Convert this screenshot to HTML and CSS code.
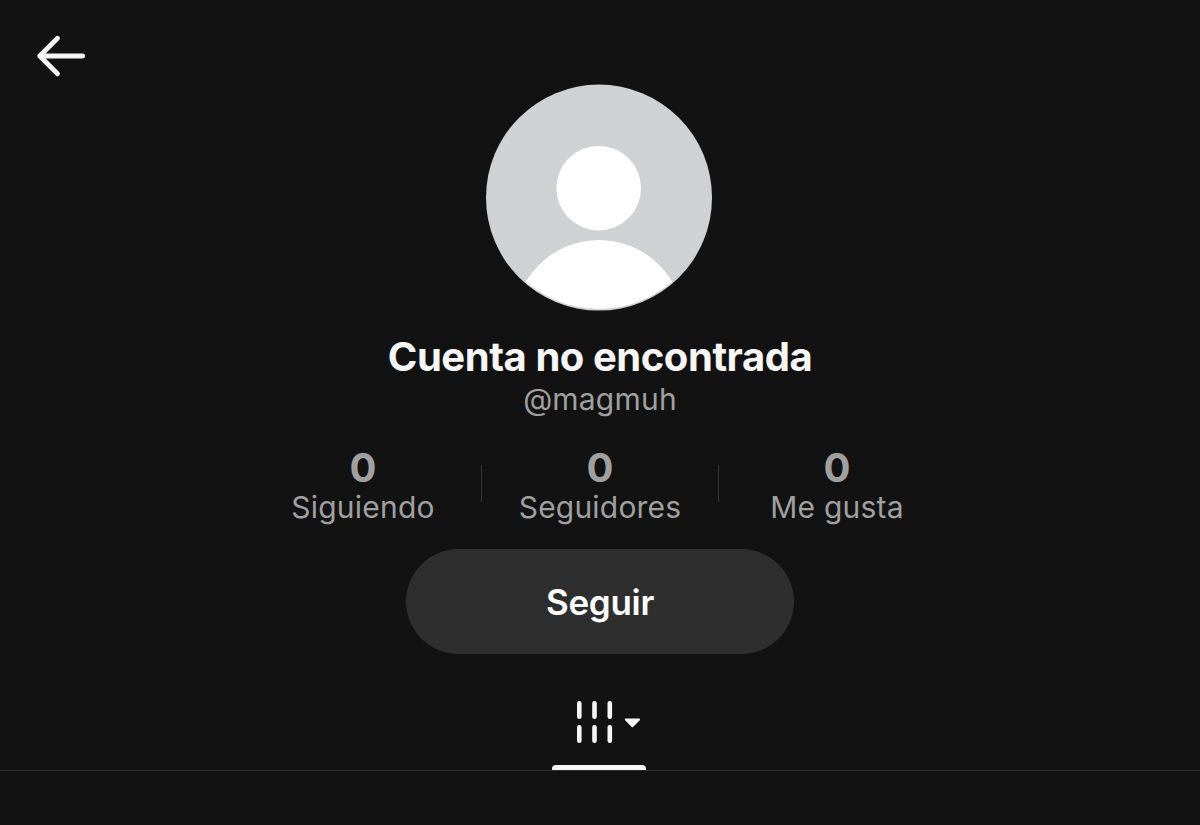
FILE: index.html
```
<!DOCTYPE html>
<html lang="es">
  <head>
    <meta charset="utf-8">
    <title>Cuenta no encontrada</title>
    <link rel="stylesheet" href="styles.css">
  </head>
  <body>
    <div class="topbar">
      <svg class="back" width="52" height="44" viewBox="0 0 52 44">
        <path d="M22.5 4.3 L4.7 22 L22.5 39.7 M4.7 22 H47.7" />
      </svg>
    </div>

    <div class="profile">
      <svg class="avatar" width="228" height="228" viewBox="0 0 228 228">
        <clipPath id="avatarClip"><circle cx="114" cy="113" r="112" /></clipPath>
        <circle cx="114" cy="113.6" r="113" fill="#d0d1d3" />
        <circle cx="113.7" cy="104.2" r="42.3" fill="#fff" />
        <circle cx="114" cy="241" r="85" fill="#fff" clip-path="url(#avatarClip)" />
      </svg>

      <h1 class="name">Cuenta no encontrada</h1>
      <div class="handle">@magmuh</div>

      <div class="stats">
        <div class="stat"><b>0</b><span>Siguiendo</span></div>
        <div class="divider"></div>
        <div class="stat"><b>0</b><span>Seguidores</span></div>
        <div class="divider"></div>
        <div class="stat"><b>0</b><span>Me gusta</span></div>
      </div>

      <button class="follow">Seguir</button>
    </div>

    <div class="tabs">
      <div class="tab">
        <svg width="66" height="44" viewBox="0 0 66 44">
          <path class="bars" d="M5.3 3.3v13.5M20.5 3.3v13.5M35.8 3.3v13.5M5.3 27.3v13.5M20.5 27.3v13.5M35.8 27.3v13.5" />
          <path class="caret" d="M51.8 19.5 H65 L58.4 26.3 Z" />
        </svg>
      </div>
    </div>
  </body>
</html>
```

FILE: styles.css
```
body {
  margin: 0;
  height: 825px;
  overflow: hidden;
  background-color: #121212;
  color: #f6f6f6;
  font-family: Inter, "Liberation Sans", sans-serif;
}
.topbar {
  height: 84px;
  padding: 34px 0 0 35px;
  box-sizing: border-box;
}
.back {
  display: block;
  fill: none;
  stroke: #f6f6f6;
  stroke-width: 4.8;
  stroke-linecap: round;
  stroke-linejoin: round;
}
.profile {
  display: flex;
  flex-direction: column;
  align-items: center;
}
.avatar {
  display: block;
  margin-right: 2px;
}
.name {
  margin: 21px 0 0;
  font-size: 40px;
  font-weight: 700;
  line-height: 48px;
  letter-spacing: -0.45px;
  white-space: nowrap;
}
.handle {
  font-size: 30px;
  line-height: 36px;
  letter-spacing: 0.2px;
  color: #a0a0a0;
}
.stats {
  display: flex;
  align-items: center;
  margin-top: 31px;
  color: #a0a0a0;
}
.stat {
  display: flex;
  flex-direction: column;
  align-items: center;
  width: 236px;
}
.stat b {
  font-size: 40px;
  line-height: 40px;
}
.stat span {
  font-size: 30px;
  line-height: 38px;
  letter-spacing: 0.2px;
}
.divider {
  width: 1px;
  height: 37px;
  margin-bottom: 8px;
  background-color: #353535;
}
.follow {
  width: 388px;
  height: 105px;
  margin-top: 23px;
  padding: 0;
  border: 0;
  border-radius: 53px;
  background-color: #2e2e2e;
  color: #fff;
  font-family: inherit;
  font-size: 35px;
  font-weight: 600;
  letter-spacing: -0.3px;
}
.tabs {
  display: flex;
  justify-content: center;
  height: 70px;
  margin-top: 46px;
  border-bottom: 1px solid #2d2d2d;
}
.tab {
  display: flex;
  flex-direction: column;
  justify-content: space-between;
  width: 94px;
  margin-right: 2px;
}
.tab svg {
  margin-left: 22px;
}
.tab::after {
  content: "";
  height: 5px;
  border-radius: 4px 4px 0 0;
  background-color: #f6f6f6;
}
.bars {
  stroke: #f6f6f6;
  stroke-width: 4.6;
  stroke-linecap: round;
}
.caret {
  fill: #f6f6f6;
  stroke: #f6f6f6;
  stroke-width: 2;
  stroke-linejoin: round;
}
```
